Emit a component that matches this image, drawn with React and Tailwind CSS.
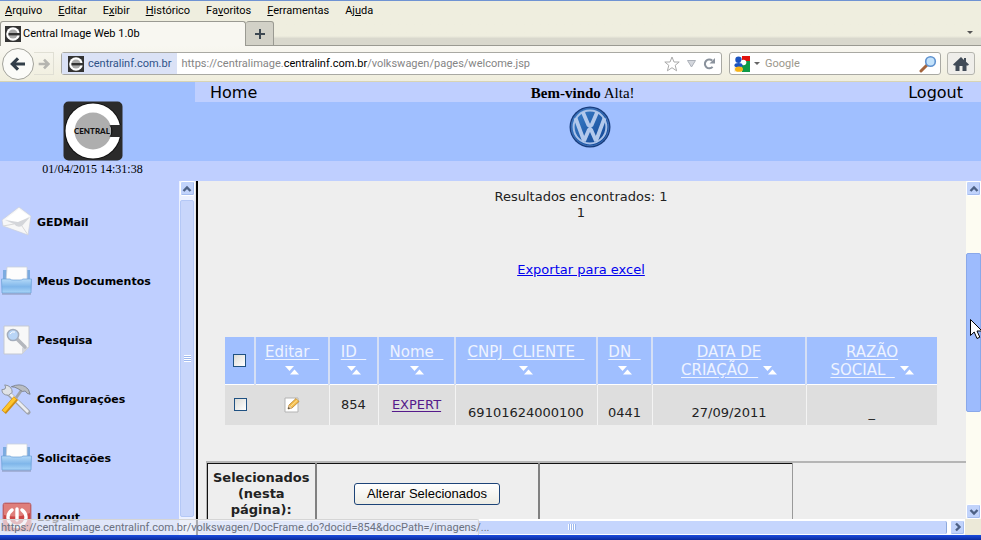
import React from "react";

const CHROME_FONT = "font-['Roboto','DejaVu_Sans',sans-serif]";

function Favicon() {
  return (
    <svg width="16" height="16" viewBox="0 0 16 16" className="shrink-0" aria-hidden="true">
      <rect width="16" height="16" fill="#333" />
      <circle cx="8" cy="8" r="6.8" fill="#fff" />
      <circle cx="8" cy="8" r="4.6" fill="#aaa" />
      <rect x="3.5" y="7" width="12" height="2.4" fill="#333" />
    </svg>
  );
}

function CentralLogo() {
  return (
    <svg width="60" height="60" viewBox="0 0 60 60" className="shrink-0" role="img" aria-label="Central">
      <rect x="0.5" y="0.5" width="59" height="59" rx="5" fill="#2b2b2b" />
      <circle cx="30" cy="30" r="28.5" fill="#111" />
      <circle cx="30" cy="30" r="27.5" fill="#fff" />
      <circle cx="30" cy="30" r="18.5" fill="#aeaeae" />
      <rect x="48" y="24" width="11" height="12" fill="#2b2b2b" />
      <path d="M47 24 Q51 30 47 36" fill="none" stroke="#111" strokeWidth="1" />
      <text x="11" y="33" fontSize="8" fontWeight="900" fontFamily="Lato, sans-serif" fill="#111">CENTRAL</text>
    </svg>
  );
}

function VwLogo() {
  return (
    <svg width="42" height="42" viewBox="0 0 42 42" role="img" aria-label="Volkswagen">
      <defs>
        <linearGradient id="vw" x1="0" y1="0" x2="1" y2="1">
          <stop offset="0" stopColor="#3f86cf" />
          <stop offset="1" stopColor="#0d3f8f" />
        </linearGradient>
      </defs>
      <circle cx="21" cy="21" r="20.5" fill="#173c7c" />
      <circle cx="21" cy="21" r="18.8" fill="url(#vw)" stroke="#3f70b8" strokeWidth="1" />
      <circle cx="21" cy="21" r="16.4" fill="none" stroke="#a9c1e8" strokeWidth="2" />
      <path d="M13.800 6 L19.600 19.500 H22.400 L28.200 6 M6.500 12 L15 35 L20 23.500 H22 L27 35 L35.500 12" fill="none" stroke="#b3c9ec" strokeWidth="3.800" strokeLinejoin="bevel" />
    </svg>
  );
}

function MailIcon() {
  return (
    <svg width="32" height="32" viewBox="0 0 32 32" aria-hidden="true">
      <path d="M2 14 L19 1 L31 10 L28 29 L3 20Z" fill="#f7f7f7" stroke="#c9cfdd" strokeWidth=".7" />
      <path d="M6 13 L19 3 L29 10 L19 18Z" fill="#fff" />
      <path d="M5 14 L18 16 L30 11 L22 20 Q17 22 14 18Z" fill="#d4d6da" />
      <path d="M3 20 L14 18 M28 29 L22 20" stroke="#d9d9d9" fill="none" />
    </svg>
  );
}

function TrayIcon() {
  return (
    <svg width="32" height="32" viewBox="0 0 32 32" aria-hidden="true">
      <defs>
        <linearGradient id="tray" x1="0" y1="0" x2="0" y2="1">
          <stop offset="0" stopColor="#b4d9f8" />
          <stop offset="0.55" stopColor="#7fb6ea" />
          <stop offset="1" stopColor="#a9d5f8" />
        </linearGradient>
      </defs>
      <path d="M3 5 H30 V18 H3Z" fill="#7cabe0" />
      <path d="M7 2 H27 V18 H6Z" fill="#fdfdfd" stroke="#c9d0dc" strokeWidth=".8" />
      <path d="M1.5 14 H10 Q11 15 13 15 H20 Q22 15 23 14 H31.500 L31 28 H2Z" fill="url(#tray)" stroke="#679dd6" strokeWidth=".7" />
      <path d="M2 29 H31" stroke="#8794b4" strokeWidth="1" />
    </svg>
  );
}

function SearchPageIcon() {
  return (
    <svg width="32" height="32" viewBox="0 0 32 32" aria-hidden="true">
      <path d="M4 2 H29 V23 L22 30 H4Z" fill="#f8f8f8" stroke="#c5c9d2" />
      <path d="M29 23 L22 23.500 V30Z" fill="#d5d7dc" />
      <path d="M17 15 L25 23" stroke="#b4b7bd" strokeWidth="3.500" strokeLinecap="round" />
      <circle cx="13" cy="11" r="5.600" fill="#b9d5f6" stroke="#a3adbd" strokeWidth="1.500" />
      <path d="M10 10 Q12 7 15 8" stroke="#fff" fill="none" />
    </svg>
  );
}

function ToolsIcon() {
  return (
    <svg width="34" height="34" viewBox="0 0 34 34" aria-hidden="true">
      <path d="M6 8 L30 31" stroke="#9fa4ad" strokeWidth="5" strokeLinecap="round" />
      <path d="M7 8 L29 30" stroke="#eceef1" strokeWidth="3" strokeLinecap="round" />
      <path d="M5 2 Q8 7 2 7 Q2 13 9 13 L13 10 Q13 3 5 2Z" fill="#dfe2e6" stroke="#8d929b" />
      <path d="M4 31 L17 16" stroke="#d18e12" strokeWidth="6" />
      <path d="M4 30 L16 16" stroke="#ffc62c" strokeWidth="3.600" />
      <path d="M17 16 L24 6" stroke="#a0a4aa" strokeWidth="3" />
      <path d="M12 4 Q21 0 27 4 Q31 6 32 12 L29 11 Q27 7 24 9 L19 6 Q16 4 12 4Z" fill="#b9bdc3" stroke="#6f747c" strokeWidth=".8" />
    </svg>
  );
}

function PowerIcon() {
  return (
    <svg width="32" height="32" viewBox="0 0 32 32" aria-hidden="true">
      <rect x="3" y="2" width="28" height="28" rx="2" fill="#cc4644" stroke="#b97b86" />
      <path d="M4 3 H30 V12 Q17 18 4 14Z" fill="#df7f7b" />
      <path d="M12 9 A9 9 0 1 0 22 9" fill="none" stroke="#fff" strokeWidth="3.400" strokeLinecap="round" />
      <path d="M17 8 V19" stroke="#fff" strokeWidth="3.400" strokeLinecap="round" />
    </svg>
  );
}

function Chevron({ className }) {
  return (
    <svg width="10" height="10" viewBox="0 0 10 10" className={className} aria-hidden="true">
      <path d="M1.500 7 L5 3.500 L8.500 7" fill="none" stroke="#4d6185" strokeWidth="2.400" />
    </svg>
  );
}

function ScrollButton({ label, turn = "" }) {
  return (
    <button
      type="button"
      aria-label={label}
      className="flex size-[15px] shrink-0 items-center justify-center rounded-[2px] border border-white bg-[#c1d3fb] shadow-[inset_-1px_-1px_0_#a5bdf0]"
    >
      <Chevron className={turn} />
    </button>
  );
}

function Menu() {
  const items = [
    ["", "A", "rquivo"],
    ["", "E", "ditar"],
    ["E", "x", "ibir"],
    ["", "H", "istórico"],
    ["Fa", "v", "oritos"],
    ["", "F", "erramentas"],
    ["Aj", "u", "da"],
  ];
  return (
    <nav className="flex h-5 items-center gap-4 px-[5px]">
      {items.map(([before, key, after]) => (
        <button type="button" key={before + key + after}>
          {before}
          <span className="underline">{key}</span>
          {after}
        </button>
      ))}
    </nav>
  );
}

function BrowserChrome() {
  return (
    <div className={`${CHROME_FONT} shrink-0 border-t border-[#6f93d3] bg-[#efeedf] text-[11px] leading-4 text-black`}>
      <Menu />
      <div className="flex h-[25px] items-stretch bg-linear-to-b from-[#efeedf] from-60% to-[#d9d8cd] to-70%">
        <div className="flex w-[246px] items-center gap-[2px] rounded-t-[3px] border-x border-t border-[#9a9a92] bg-[#f8f7f1] pl-1">
          <Favicon />
          <span>Central Image Web 1.0b</span>
        </div>
        <button type="button" aria-label="Nova aba" className="flex w-[28px] items-center justify-center rounded-t-[3px] border border-l-0 border-[#9a9a92] bg-[#d2d1c7]">
          <svg width="10" height="10" viewBox="0 0 10 10" aria-hidden="true"><path d="M5 0V10M0 5H10" stroke="#3d4852" strokeWidth="2" /></svg>
        </button>
        <div className="flex grow items-center justify-end border-b border-[#9a9a92] pr-2">
          <svg width="6" height="4" viewBox="0 0 6 4" aria-hidden="true"><path d="M0 0H6L3 3Z" fill="#555" /></svg>
        </div>
      </div>
      <div className="flex h-9 items-center border-b border-[#d8d4b4] bg-linear-to-b from-[#f8f7f1] to-[#f0eedd] pr-[6px] pl-[2px]">
        <button type="button" aria-label="Voltar" className="flex size-8 shrink-0 items-center justify-center rounded-full border border-[#a3a39b] bg-[#fbfbf8]">
          <svg width="16" height="14" viewBox="0 0 18 16" aria-hidden="true"><path d="M17 8H4M9 1.500L2.500 8L9 14.500" fill="none" stroke="#323e49" strokeWidth="3.600" /></svg>
        </button>
        <button type="button" aria-label="Avançar" className="flex h-[23px] w-[20px] shrink-0 items-center justify-center border-y border-r border-[#e0dfd4]">
          <svg width="12" height="12" viewBox="0 0 18 16" aria-hidden="true"><path d="M1 8H14M9 1.500L15.500 8L9 14.500" fill="none" stroke="#b5b5b0" strokeWidth="4" /></svg>
        </button>
        <div className="ml-[7px] flex h-[23px] grow items-center rounded-[3px] border border-[#a9a9a3] bg-white">
          <div className="flex h-full items-center gap-1 bg-[#dbe2f6] px-[6px] text-[#2e5288]">
            <Favicon />
            <span>centralinf.com.br</span>
          </div>
          <p className="grow pl-1 whitespace-nowrap text-[#858585]">
            https://centralimage.<span className="text-black">centralinf.com.br</span>/volkswagen/pages/welcome.jsp
          </p>
          <div className="flex items-center gap-[7px] pr-[5px]">
            <button type="button" aria-label="Favorito">
              <svg width="16" height="16" viewBox="0 0 16 16" className="block" aria-hidden="true"><path d="M8 1L10 6H15.200L11.200 9.300L12.600 14.800L8 11.700L3.400 14.800L4.800 9.300L.8 6H6Z" fill="#fff" stroke="#aaa" /></svg>
            </button>
            <button type="button" aria-label="Histórico de endereços">
              <svg width="9" height="8" viewBox="0 0 9 8" className="block" aria-hidden="true"><path d="M.5 .5H8.500L4.500 7Z" fill="#d4d7dd" stroke="#abb0b8" /></svg>
            </button>
            <button type="button" aria-label="Atualizar">
              <svg width="13" height="12" viewBox="0 0 13 12" className="block" aria-hidden="true"><path d="M9.600 8.800A4.400 4.400 0 1 1 9.200 2.600" fill="none" stroke="#8a929c" strokeWidth="2" /><path d="M12 0V5.500H6.500Z" fill="#8a929c" /></svg>
            </button>
          </div>
        </div>
        <label className="ml-[7px] flex h-[23px] w-[212px] shrink-0 items-center rounded-[3px] border border-[#a9a9a3] bg-white pr-[3px] pl-1">
          <svg width="16" height="16" viewBox="0 0 16 16" className="shrink-0" aria-hidden="true">
            <path d="M8 0H16V5H8Z" fill="#e0120d" />
            <path d="M8 5H16V16H8Z" fill="#109a47" />
            <path d="M0 8H8V16H0Z" fill="#f5f1e4" />
            <circle cx="4.500" cy="3.800" r="3.200" fill="#1b54c0" />
            <circle cx="9.500" cy="6.500" r="2.800" fill="#fff" />
            <ellipse cx="4.500" cy="9.300" rx="4" ry="2.200" fill="#1b54c0" />
            <ellipse cx="5" cy="13.200" rx="4" ry="2.600" fill="#f7b416" />
          </svg>
          <svg width="6" height="4" viewBox="0 0 6 4" className="mr-[5px] ml-1 shrink-0" aria-hidden="true"><path d="M0 0H6L3 3Z" fill="#666" /></svg>
          <input type="text" aria-label="Pesquisar no Google" placeholder="Google" className="min-w-0 grow bg-transparent outline-none placeholder:text-[#9b978b]" />
          <svg width="18" height="18" viewBox="0 0 18 18" className="shrink-0" aria-hidden="true">
            <path d="M2 16L8 10" stroke="#a4643c" strokeWidth="3" strokeLinecap="round" />
            <circle cx="11.500" cy="6.500" r="4.800" fill="#c3e2fb" stroke="#5f92cf" strokeWidth="1.600" />
          </svg>
        </label>
        <button type="button" aria-label="Página inicial" className="ml-[6px] flex h-[23px] w-[28px] shrink-0 items-center justify-center rounded-[3px] border border-[#b5b5ae] bg-[#efeeea]">
          <svg width="16" height="14" viewBox="0 0 16 14" aria-hidden="true"><path d="M8 0L0 7.500L1 8.500H2.500V14H6.500V9H9.500V14H13.500V8.500H15L16 7.500L13 4.700V1H11V2.900Z" fill="#414b57" /></svg>
        </button>
      </div>
    </div>
  );
}

function SiteHeader() {
  return (
    <header className="flex shrink-0 bg-[#bfcfff] text-black">
      <div className="flex w-[195px] shrink-0 flex-col">
        <div className="flex h-[79px] items-end justify-center bg-[#a0bfff] pr-[10px]">
          <CentralLogo />
        </div>
        <time className="pr-[10px] text-center font-['Liberation_Serif',serif] text-[12px] leading-4">01/04/2015 14:31:38</time>
      </div>
      <div className="flex grow flex-col pb-5">
        <div className="flex h-5 items-center justify-between pt-[2px] pr-[18px] pl-[15px] font-['DejaVu_Sans',sans-serif] text-base">
          <a href="#home">Home</a>
          <p className="font-['Liberation_Serif',serif] text-[15px]"><b>Bem-vindo</b> Alta!</p>
          <a href="#logout">Logout</a>
        </div>
        <div className="flex h-[59px] justify-center bg-[#a0bfff] pt-1 pl-1">
          <VwLogo />
        </div>
      </div>
    </header>
  );
}

const links = [
  ["GEDMail", MailIcon],
  ["Meus Documentos", TrayIcon],
  ["Pesquisa", SearchPageIcon],
  ["Configurações", ToolsIcon],
  ["Solicitações", TrayIcon],
  ["Logout", PowerIcon],
];

function Sidebar() {
  return (
    <aside className="flex w-[198px] shrink-0 border-r-2 border-black bg-[#bfcfff]">
      <nav className="grow overflow-hidden pt-[13px]">
        {links.map(([label, Icon]) => (
          <a key={label} href="#menu" className="flex h-[59px] items-center gap-[5px] font-['DejaVu_Sans',sans-serif] text-[11px] font-bold whitespace-nowrap text-black">
            <span className="flex w-8 shrink-0 justify-center pb-1"><Icon /></span>
            {label}
          </a>
        ))}
      </nav>
      <div className="flex w-[17px] shrink-0 flex-col items-center border-r border-[#e4e4e4] bg-white/70">
        <ScrollButton label="Subir menu" />
        <div className="my-1 mb-[18px] flex w-[14px] grow items-center justify-center rounded-[2px] border border-[#b4c8f6] bg-[#c8d6fb]">
          <div className="h-[7px] w-[7px] bg-[repeating-linear-gradient(#fff_0_1px,#9db8ee_1px_2px)]" />
        </div>
      </div>
    </aside>
  );
}

function SortArrows() {
  return (
    <svg width="14" height="9" viewBox="0 0 14 9" className="inline-block" aria-hidden="true">
      <path d="M0 0H9L4.500 5Z" fill="#fff" />
      <path d="M5 8.500L9.500 3.500L14 8.500Z" fill="#fff" />
    </svg>
  );
}

function HeadCell({ children, stacked = false }) {
  return (
    <th scope="col" className="border-l-2 border-[#d5dff5] pt-[6px] align-top font-normal text-[#eef3ff]">
      <a href="#ordenar" className="whitespace-pre-wrap underline underline-offset-2">{children}</a>
      {stacked ? <br /> : " "}
      <SortArrows />
    </th>
  );
}

function ResultTable() {
  const cell = "border-l border-[#f4f4f4] pt-[17px]";
  const tick = "block mx-auto size-[13px] appearance-none border border-[#1f5182] bg-linear-to-br from-[#dcdcd7] to-white";
  return (
    <table className="mt-[59px] w-full table-fixed border-collapse text-center">
      <colgroup>
        <col className="w-[30px]" />
        <col className="w-[74px]" />
        <col className="w-[49px]" />
        <col className="w-[77px]" />
        <col className="w-[142px]" />
        <col className="w-[55px]" />
        <col className="w-[154px]" />
        <col className="w-[131px]" />
      </colgroup>
      <thead>
        <tr className="h-[47px] border-b border-white bg-[#a0bfff] text-[15px] leading-[18px]">
          <th><input type="checkbox" aria-label="Selecionar todos" className={tick} /></th>
          <HeadCell stacked>{"Editar\u00a0\u00a0"}</HeadCell>
          <HeadCell stacked>{"ID\u00a0\u00a0"}</HeadCell>
          <HeadCell stacked>{"Nome\u00a0\u00a0"}</HeadCell>
          <HeadCell stacked>{"CNPJ\u00a0\u00a0CLIENTE\u00a0\u00a0"}</HeadCell>
          <HeadCell stacked>{"DN\u00a0\u00a0"}</HeadCell>
          <HeadCell>{"DATA DE\nCRIAÇÃO\u00a0\u00a0"}</HeadCell>
          <HeadCell>{"RAZÃO\nSOCIAL\u00a0\u00a0"}</HeadCell>
        </tr>
      </thead>
      <tbody>
        <tr className="h-[41px] bg-[#dedede] text-[#222]">
          <td><input type="checkbox" aria-label="Selecionar 854" className={tick} /></td>
          <td>
            <button type="button" aria-label="Editar 854" className="block mx-auto">
              <svg width="16" height="16" viewBox="0 0 16 16" aria-hidden="true">
                <path d="M1 1H14V15H1Z" fill="#fff" stroke="#b3b3b3" />
                <path d="M4 12L5 8L12 1.500L15 4.500L8 11Z" fill="#f5bd4c" stroke="#b5812f" strokeWidth=".8" />
                <path d="M6.500 9.500L13.500 3" stroke="#ffe49a" />
                <path d="M4 12L5 8L8 11Z" fill="#e8c9a0" />
                <path d="M4 12L4.500 10L6 11.500Z" fill="#333" />
              </svg>
            </button>
          </td>
          <td className="border-l border-[#f4f4f4]">854</td>
          <td className="border-l border-[#f4f4f4]"><a href="#expert" className="text-[#551a8b] underline underline-offset-2">EXPERT</a></td>
          <td className={cell}>69101624000100</td>
          <td className={cell}>0441</td>
          <td className={cell}>27/09/2011</td>
          <td className={cell}>_</td>
        </tr>
      </tbody>
    </table>
  );
}

function Actions() {
  return (
    <div className="mt-9 ml-2 border-t-2 border-l border-[#b5b5b5]">
      <table className="w-[586px] table-fixed border-collapse border-t border-[#111] text-center">
        <tbody>
          <tr className="h-[60px]">
            <th scope="row" className="w-[108px] border-r-2 border-l border-[#111] border-r-[#808080] align-top pt-[6px]">Selecionados (nesta página):</th>
            <td className="w-[223px] border-r-2 border-l border-[#111] border-r-[#808080]">
              <button type="button" className="h-[22px] w-[146px] rounded-[3px] border border-[#1d4478] bg-linear-to-b from-white to-[#edece4] font-['Liberation_Sans',sans-serif] text-[13px] leading-4 text-black">
                Alterar Selecionados
              </button>
            </td>
            <td className="border-r border-[#999]" />
          </tr>
        </tbody>
      </table>
    </div>
  );
}

function Content() {
  return (
    <main className="flex min-w-0 grow flex-col bg-[#eeeeee]">
      <div className="flex min-h-0 grow">
        <div className="min-w-0 grow overflow-hidden pt-2 font-['DejaVu_Sans',sans-serif] text-[13px] leading-4 text-[#222]">
          <div className="pr-[29px] pl-[27px]">
            <p className="text-center">Resultados encontrados: 1<br />1</p>
            <p className="mt-[41px] text-center"><a href="#excel" className="text-[#0000ee] underline">Exportar para excel</a></p>
            <ResultTable />
          </div>
          <Actions />
        </div>
        <div className="flex w-[15px] shrink-0 flex-col items-center bg-[#fdfcf2]">
          <ScrollButton label="Rolar para cima" />
          <div className="grow-[57] basis-0" />
          <div className="w-full grow-[158] basis-0 rounded-[2px] border border-[#8aa8ea] bg-[#9dbbfd]" />
          <div className="grow-[92] basis-0" />
          <ScrollButton label="Rolar para baixo" turn="rotate-180" />
        </div>
      </div>
      <div className="flex h-4 shrink-0 items-center bg-white">
        <div className="mr-[3px] flex h-[13px] grow items-center justify-center rounded-[2px] border-r border-[#8ea9dc] bg-[#c5d5fd]">
          <div className="h-[6px] w-[8px] bg-[repeating-linear-gradient(90deg,#fff_0_1px,#9db8ee_1px_2px)]" />
        </div>
        <ScrollButton label="Rolar para a direita" turn="rotate-90" />
        <div className="h-full w-[16px] shrink-0 bg-[#ece9d8]" />
      </div>
    </main>
  );
}

export default function App() {
  return (
    <div className="relative flex h-screen flex-col overflow-hidden">
      <BrowserChrome />
      <SiteHeader />
      <div className="flex min-h-0 grow">
        <Sidebar />
        <Content />
      </div>
      <div className="h-[5px] shrink-0 bg-linear-to-b from-[#1c4de0] to-[#0a2a9c]" />
      <div className={`${CHROME_FONT} absolute bottom-[5px] left-0 h-4 w-[479px] rounded-tr-[2px] border-t border-r border-[#d5d5d5] bg-[#eef0f6]/70 pl-px text-[11px] leading-4 whitespace-nowrap text-[#6b7180]`}>
        https://centralimage.centralinf.com.br/volkswagen/DocFrame.do?docid=854&amp;docPath=/imagens/...
      </div>
      <svg width="13" height="21" viewBox="0 0 13 21" className="absolute top-[319px] right-[-2px]" aria-hidden="true">
        <path d="M.5 .5V16.500L4.200 13L7 19.500L9.800 18.200L7 12H12Z" fill="#fff" stroke="#000" />
      </svg>
    </div>
  );
}
